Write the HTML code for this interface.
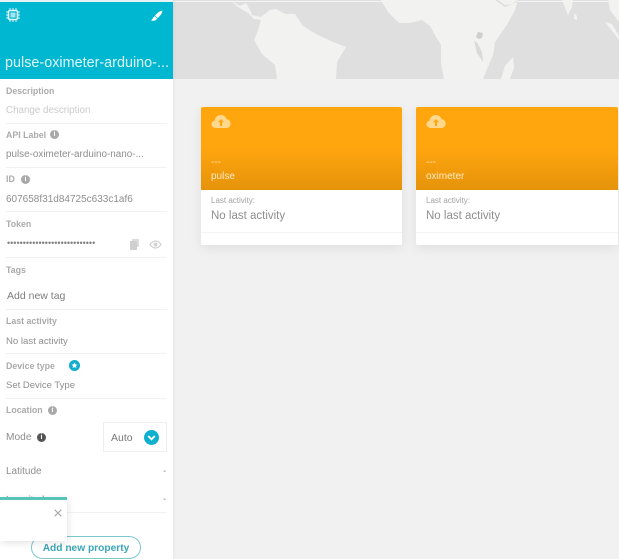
<!DOCTYPE html>
<html><head><meta charset="utf-8">
<style>
html,body{margin:0;padding:0}
body{width:619px;height:559px;position:relative;overflow:hidden;background:#f1f1f1;font-family:"Liberation Sans",sans-serif;color:#777}
#w{position:absolute;left:0;top:0;width:619px;height:559px;overflow:hidden;filter:blur(.3px)}
.a{position:absolute;white-space:nowrap}
.lab{font-size:8.8px;font-weight:bold;color:#ababab;left:6px;line-height:12px}
.val{font-size:9.8px;color:#8e8e8e;left:6px;line-height:14px}
.hr{position:absolute;left:6px;width:161px;height:1px;background:#f1f1f1}
.inf{position:absolute;width:9px;height:9px;border-radius:50%;background:#a9a9a9;color:#fff;font-size:7px;font-weight:bold;line-height:9px;text-align:center}
.card{position:absolute;top:107px;height:138px;background:#fff;border-radius:2px;box-shadow:0 3px 12px rgba(0,0,0,.08);overflow:hidden}
.card .top{position:absolute;left:0;top:0;width:100%;height:83px;background:linear-gradient(#ffa50e 0,#ffa50e 50%,#e5930b 100%)}
</style></head><body><div id="w">
<svg class="a" style="left:173px;top:0" width="446" height="79" viewBox="173 0 446 79">
<rect x="173" y="0" width="446" height="79" fill="#dfdfdf"/>
<rect x="173" y="1" width="446" height="1" fill="#f3f3f3"/>
<g fill="#f2f2f1">
<path d="M230 0L240 6 246 3 251 12 252 15 261 17 270 10 276 9 285 14 295 14 303 26 316 34 333 42 346 47 337 62 336 79H277L275 65 262 54 254 40 258 30 261 20 254 19 248 13 238 7Z"/>
<path d="M381 0L388 12 399 23 410 23 422 20 430 26 436 37 441 45 441 63 444 79H483L490 62 493 55 495 42 508 23 515 10 518 0Z"/>
<path d="M513 57L514 68 510 79H501L505 66Z"/>
<path d="M562 0L568 15 572 7 573 0Z"/>
<path d="M574 13L577 16 577 20 574 19Z"/>
<path d="M608 0L610 10 619 22V0Z"/>
<path d="M605 22L612 24 619 36V40Z"/>
</g>
<path d="M495 0L505 7 517 2 518 0 512 4 505 5 498 0Z" fill="#dfdfdf"/>
<path d="M478 32L483 33 482 38 479 39 476 37Z" fill="#cfcfcf"/>
<path d="M474 40L477 53 483 62 482 52 478 44Z" fill="#dadada"/>
</svg>

<div class="a" style="left:0;top:0;width:173px;height:559px;background:#fff;box-shadow:1px 0 3px rgba(0,0,0,.05)"></div>
<div class="a" style="left:0;top:0;width:173px;height:79px;background:#00b7d2;border-top:2px solid #e6f4f6;box-sizing:border-box"></div>
<svg class="a" style="left:4px;top:6px" width="18" height="18" viewBox="0 0 18 18">
<rect x="4.500" y="4.500" width="9" height="9" rx="1.500" fill="none" stroke="#e4f7fa" stroke-width="1.600"/>
<rect x="6.500" y="6.500" width="5" height="5" fill="#a5e6ef"/>
<path d="M6 2v2M9 2v2M12 2v2M6 14v2M9 14v2M12 14v2M2 6h2M2 9h2M2 12h2M14 6h2M14 9h2M14 12h2" stroke="#d5f3f8" stroke-width="1"/>
</svg>
<svg class="a" style="left:150px;top:10px" width="13" height="12" viewBox="0 0 13 12"><path d="M12.500.5C9.500 1 6.500 3.500 5 5.800L7.800 8C10 6 12.300 3.500 12.500.5Z" fill="#fff"/><path d="M4.500 6.300C3 7 3 9 1 10.500c3.200.8 5.800-.3 6.300-2.300Z" fill="#fff"/></svg>
<div class="a" style="left:5px;top:54px;font-size:14.400px;line-height:19px;color:#dff6fa">pulse-oximeter-arduino-...</div>

<div class="a lab" style="top:85px">Description</div>
<div class="a val" style="top:104px;color:#cbcbcb">Change description</div>
<div class="hr" style="top:123px"></div>
<div class="a lab" style="top:129px">API Label</div><div class="inf" style="left:50px;top:130px">i</div>
<div class="a val" style="top:148px;font-size:9.900px">pulse-oximeter-arduino-nano-...</div>
<div class="hr" style="top:167px"></div>
<div class="a lab" style="top:173px">ID</div><div class="inf" style="left:21px;top:175px">i</div>
<div class="a val" style="top:193px;font-size:10px">607658f31d84725c633c1af6</div>
<div class="hr" style="top:211px"></div>
<div class="a lab" style="top:218px">Token</div>
<div class="a" style="left:7px;top:239px;width:88px;height:9px;font-size:9px;line-height:9px;color:#808080;overflow:hidden">••••••••••••••••••••••••••••••••••••</div>
<svg class="a" style="left:129px;top:239px" width="11" height="11" viewBox="0 0 11 11"><rect x="3" y="0" width="7" height="8" fill="#dcdcdc"/><rect x="1" y="2" width="7" height="9" fill="#cfcfcf"/></svg>
<svg class="a" style="left:149px;top:240px" width="13" height="9" viewBox="0 0 13 9"><path d="M1 4.500C3 1.500 5 1 6.500 1S10 1.500 12 4.500C10 7.500 8 8 6.500 8S3 7.500 1 4.500Z" fill="none" stroke="#d2d2d2" stroke-width="1.200"/><circle cx="6.500" cy="4.500" r="2" fill="#d2d2d2"/></svg>
<div class="hr" style="top:257px"></div>
<div class="a lab" style="top:264px">Tags</div>
<div class="a val" style="left:7px;top:289px;font-size:10.500px;color:#7d7d7d">Add new tag</div>
<div class="hr" style="top:309px"></div>
<div class="a lab" style="top:315px">Last activity</div>
<div class="a val" style="top:335px;font-size:9.600px">No last activity</div>
<div class="hr" style="top:353px"></div>
<div class="a lab" style="top:360px">Device type</div>
<svg class="a" style="left:69px;top:360px" width="11" height="11" viewBox="0 0 11 11"><circle cx="5.500" cy="5.500" r="5.500" fill="#12aecb"/><path d="M5.500 2.400l.9 2 2.100.2-1.600 1.400.5 2.100-1.900-1.100-1.900 1.100.5-2.100-1.600-1.400 2.100-.2Z" fill="#fff"/></svg>
<div class="a val" style="top:379px;font-size:9.500px">Set Device Type</div>
<div class="hr" style="top:398px"></div>
<div class="a lab" style="top:404px">Location</div><div class="inf" style="left:48px;top:406px">i</div>
<div class="a val" style="top:431px;font-size:10.200px">Mode</div>
<div class="inf" style="left:37px;top:433px;background:#555">i</div>
<div class="a" style="left:103px;top:422px;width:64px;height:30px;border:1px solid #efefef;box-sizing:border-box"></div>
<div class="a val" style="left:111px;top:431px;font-size:10.500px;color:#777">Auto</div>
<svg class="a" style="left:144px;top:430px" width="15" height="15" viewBox="0 0 15 15"><circle cx="7.500" cy="7.500" r="7.500" fill="#0fb0cd"/><path d="M4.200 6l3.300 3.300L10.800 6" fill="none" stroke="#fff" stroke-width="1.800"/></svg>
<div class="a val" style="top:465px;font-size:10px">Latitude</div>
<div class="a val" style="left:163px;top:465px">-</div>
<div class="a val" style="top:494px;font-size:10px">Longitude</div>
<div class="a val" style="left:163px;top:493px">-</div>
<div class="hr" style="top:512px"></div>
<div class="a" style="left:31px;top:536px;width:110px;height:23px;border:1px solid #7cc8d1;border-radius:12px;box-sizing:border-box;text-align:center;font-size:10.200px;font-weight:bold;line-height:23px;color:#3aa6b6;background:#fff">Add new property</div>

<div class="a" style="left:0;top:497px;width:67px;height:44px;background:#fff;box-shadow:1px 2px 7px rgba(0,0,0,.11)"></div>
<div class="a" style="left:0;top:497px;width:67px;height:3px;background:#56c4b8"></div>
<svg class="a" style="left:54px;top:509px" width="8" height="8" viewBox="0 0 8 8"><path d="M.7.7l6.600 6.600M7.300.7L.7 7.300" stroke="#aaa" stroke-width="1.100"/></svg>

<div class="card" style="left:201px;width:201px"><div class="top"></div>
<svg class="a" style="left:10px;top:7px" width="20" height="15" viewBox="0 0 20 15"><path d="M5 14C2 14 .5 12.300.5 10.300c0-2 1.300-3.300 3-3.600C4 3.400 6.500 1 10 1c3 0 5 2 5.600 4.300 2.500.2 4 2.200 4 4.500 0 2.400-1.800 4.200-4.300 4.200Z" fill="#ffd88e"/><path d="M10 5l-3 3.300h2V12h2V8.300h2Z" fill="#ffa50e"/></svg>
<div class="a" style="left:10px;top:50px;font-size:10px;line-height:12px;color:#ffe3ad">---</div>
<div class="a" style="left:10px;top:63px;font-size:10px;line-height:13px;color:#ffeac5">pulse</div>
<div class="a" style="left:10px;top:88px;font-size:8px;line-height:11px;color:#a2a2a2">Last activity:</div>
<div class="a" style="left:10px;top:102px;font-size:11.500px;line-height:15px;color:#8e8e8e">No last activity</div>
<div class="a" style="left:0;top:125px;width:100%;height:1px;background:#f3f3f3"></div>
</div>
<div class="card" style="left:416px;width:202px"><div class="top"></div>
<svg class="a" style="left:10px;top:7px" width="20" height="15" viewBox="0 0 20 15"><path d="M5 14C2 14 .5 12.300.5 10.300c0-2 1.300-3.300 3-3.600C4 3.400 6.500 1 10 1c3 0 5 2 5.600 4.300 2.500.2 4 2.200 4 4.500 0 2.400-1.800 4.200-4.300 4.200Z" fill="#ffd88e"/><path d="M10 5l-3 3.300h2V12h2V8.300h2Z" fill="#ffa50e"/></svg>
<div class="a" style="left:10px;top:50px;font-size:10px;line-height:12px;color:#ffe3ad">---</div>
<div class="a" style="left:10px;top:63px;font-size:10px;line-height:13px;color:#ffeac5">oximeter</div>
<div class="a" style="left:10px;top:88px;font-size:8px;line-height:11px;color:#a2a2a2">Last activity:</div>
<div class="a" style="left:10px;top:102px;font-size:11.500px;line-height:15px;color:#8e8e8e">No last activity</div>
<div class="a" style="left:0;top:125px;width:100%;height:1px;background:#f3f3f3"></div>
</div>
</div></body></html>
